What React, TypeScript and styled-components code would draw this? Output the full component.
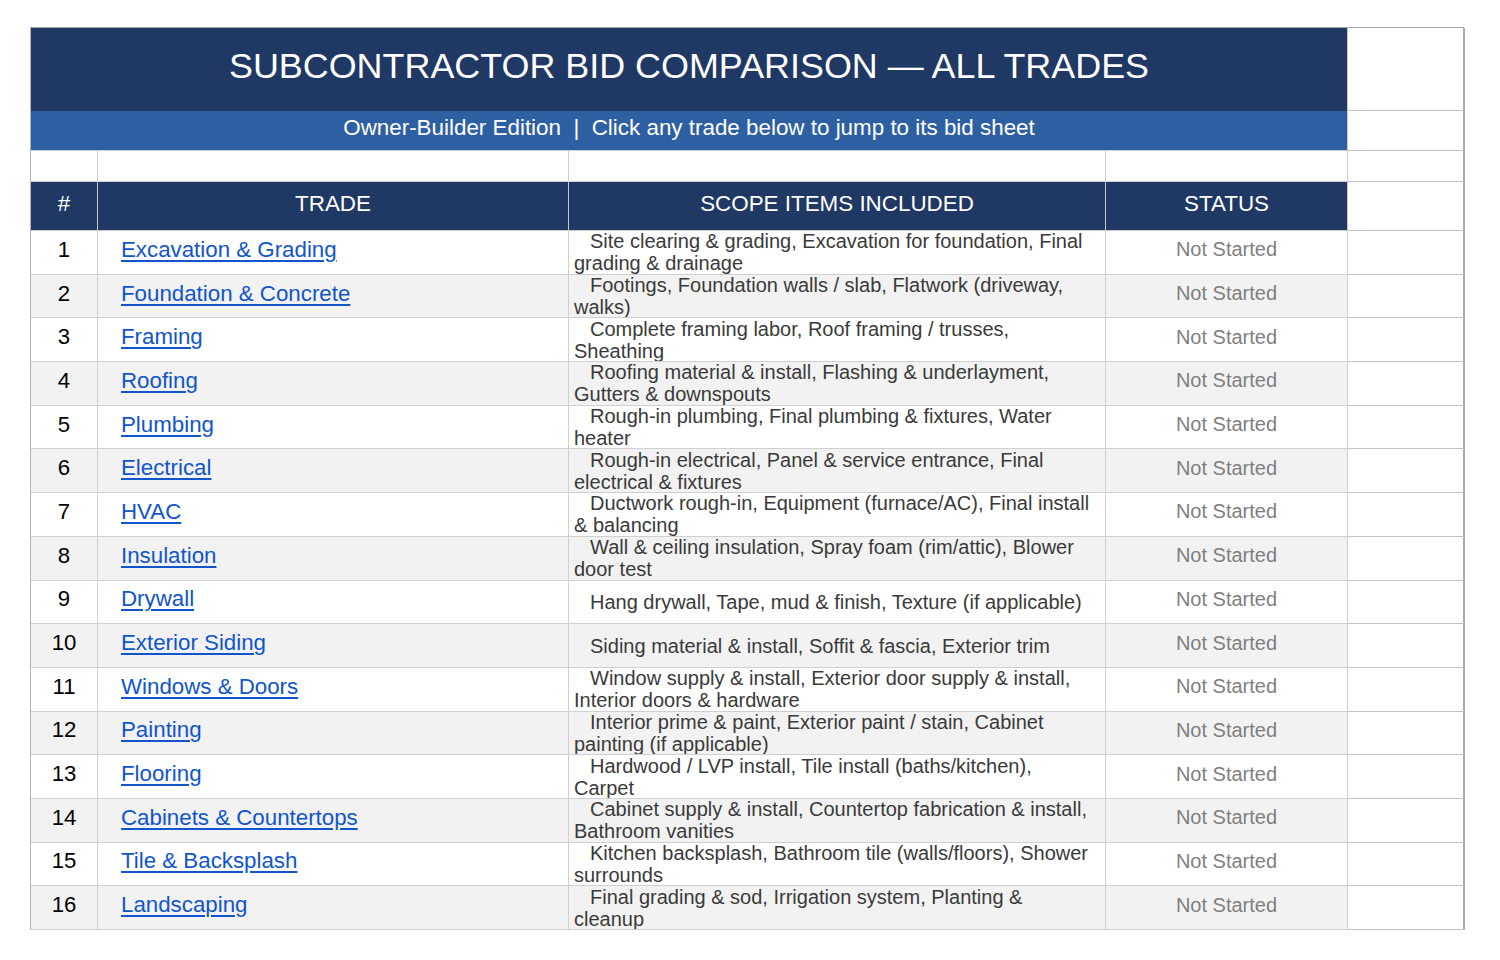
import styled, { createGlobalStyle } from "styled-components"

const trades = [
  { name: "Excavation & Grading", scope: "Site clearing & grading, Excavation for foundation, Final grading & drainage" },
  { name: "Foundation & Concrete", scope: "Footings, Foundation walls / slab, Flatwork (driveway, walks)" },
  { name: "Framing", scope: "Complete framing labor, Roof framing / trusses, Sheathing" },
  { name: "Roofing", scope: "Roofing material & install, Flashing & underlayment, Gutters & downspouts" },
  { name: "Plumbing", scope: "Rough-in plumbing, Final plumbing & fixtures, Water heater" },
  { name: "Electrical", scope: "Rough-in electrical, Panel & service entrance, Final electrical & fixtures" },
  { name: "HVAC", scope: "Ductwork rough-in, Equipment (furnace/AC), Final install & balancing" },
  { name: "Insulation", scope: "Wall & ceiling insulation, Spray foam (rim/attic), Blower door test" },
  { name: "Drywall", scope: "Hang drywall, Tape, mud & finish, Texture (if applicable)" },
  { name: "Exterior Siding", scope: "Siding material & install, Soffit & fascia, Exterior trim" },
  { name: "Windows & Doors", scope: "Window supply & install, Exterior door supply & install, Interior doors & hardware" },
  { name: "Painting", scope: "Interior prime & paint, Exterior paint / stain, Cabinet painting (if applicable)" },
  { name: "Flooring", scope: "Hardwood / LVP install, Tile install (baths/kitchen), Carpet" },
  { name: "Cabinets & Countertops", scope: "Cabinet supply & install, Countertop fabrication & install, Bathroom vanities" },
  { name: "Tile & Backsplash", scope: "Kitchen backsplash, Bathroom tile (walls/floors), Shower surrounds" },
  { name: "Landscaping", scope: "Final grading & sod, Irrigation system, Planting & cleanup" },
]

const Global = createGlobalStyle`
body{
    margin: 0;
    background: #ffffff;
    font-family: "Liberation Sans", Arial, sans-serif;
}
`

const App = () => {
  return (
    <Page>
      <Global />
      <Sheet>
        <TitleCell>SUBCONTRACTOR BID COMPARISON — ALL TRADES</TitleCell>
        <SpareCell />
        <SubtitleCell>Owner-Builder Edition  |  Click any trade below to jump to its bid sheet</SubtitleCell>
        <SpareCell />
        <BlankCell />
        <BlankCell />
        <BlankCell />
        <BlankCell />
        <SpareCell />
        <HeadCell>#</HeadCell>
        <HeadCell>TRADE</HeadCell>
        <HeadCell>SCOPE ITEMS INCLUDED</HeadCell>
        <HeadCell>STATUS</HeadCell>
        <SpareCell />
        {trades.map((t, i) => {
          const shade = i % 2 === 1
          return [
            <NumCell key={"n" + i} $shade={shade}>{i + 1}</NumCell>,
            <TradeCell key={"t" + i} $shade={shade}>
              <TradeLink href="#">{t.name}</TradeLink>
            </TradeCell>,
            <ScopeCell key={"s" + i} $shade={shade}>
              <ScopeText>{t.scope}</ScopeText>
            </ScopeCell>,
            <StatusCell key={"st" + i} $shade={shade}>Not Started</StatusCell>,
            <SpareCell key={"x" + i} />,
          ]
        })}
      </Sheet>
    </Page>
  )
}
export default App

const Page = styled.div`
padding: 27px 0 0 30px;
`
const Sheet = styled.div`
display: grid;
width: 1434px;
grid-template-columns: 67px 471px 537px 242px 117px;
grid-template-rows: 83px 40px 31px 49px repeat(16, 43.6875px);
box-sizing: border-box;
border-top: 1px solid #a9a9a9;
border-left: 1px solid #b4b4b4;
`
const Cell = styled.div<{ $shade?: boolean }>`
box-sizing: border-box;
border-right: 1px solid #d0d0d0;
border-bottom: 1px solid #d0d0d0;
background-color: ${(p) => (p.$shade ? "#f2f2f2" : "#ffffff")};
display: flex;
align-items: center;
overflow: hidden;
min-width: 0;
`
const TitleCell = styled(Cell)`
grid-column: 1 / 5;
background-color: #1f3864;
border-bottom: none;
border-right: 1px solid #c8c8c8;
justify-content: center;
color: #ffffff;
font-size: 35.9px;
padding-bottom: 7px;
`
const SubtitleCell = styled(Cell)`
grid-column: 1 / 5;
background-color: #2e5fa3;
border-right: 1px solid #c8c8c8;
justify-content: center;
color: #ffffff;
font-size: 22.4px;
white-space: pre;
padding-bottom: 5px;
`
const BlankCell = styled(Cell)``
const SpareCell = styled(Cell)`
background-color: #ffffff;
border-right: 2px solid #a9a9a9;
border-bottom-color: #c4c4c4;
`
const HeadCell = styled(Cell)`
background-color: #1f3864;
border-right-color: #c8c8c8;
border-bottom-color: #c8c8c8;
justify-content: center;
color: #ffffff;
font-size: 22.4px;
padding-bottom: 5px;
`
const NumCell = styled(Cell)`
justify-content: center;
color: #000000;
font-size: 22.2px;
padding-bottom: 5px;
`
const TradeCell = styled(Cell)`
padding-left: 23px;
padding-bottom: 5px;
`
const TradeLink = styled.a`
color: #1155cc;
font-size: 22.3px;
text-decoration: underline;
text-underline-offset: 3px;
white-space: nowrap;
`
const ScopeCell = styled(Cell)`
padding: 0 11px 0 5px;
`
const ScopeText = styled.div`
color: #3a3a3a;
font-size: 20px;
line-height: 22px;
text-indent: 16px;
`
const StatusCell = styled(Cell)`
justify-content: center;
color: #7f7f7f;
font-size: 20px;
padding-bottom: 5px;
`
